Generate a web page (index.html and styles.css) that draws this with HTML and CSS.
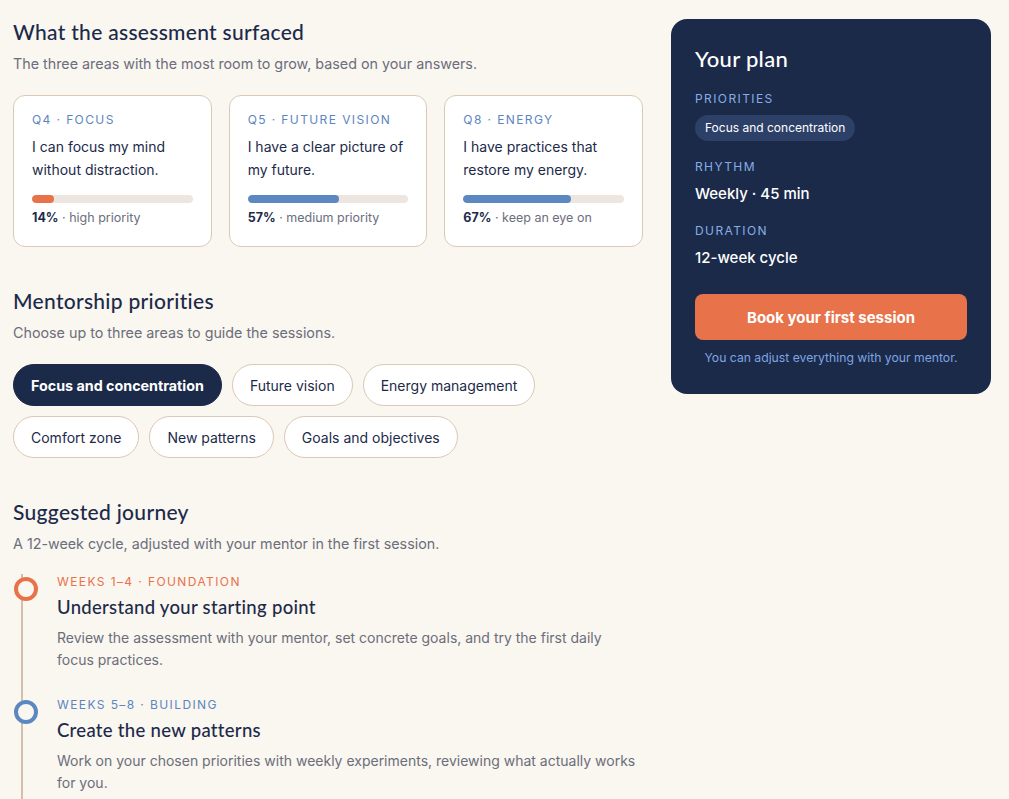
FILE: index.html
```html
<!DOCTYPE html>
<html>
<head>
    <title>Your mentorship plan</title>
    <link rel="stylesheet" href="styles.css">
</head>
<body>
    <div class="page">
        <main class="main-col">
            <!-- Assessment results -->
            <section class="section">
                <h2 class="section-title">What the assessment surfaced</h2>
                <p class="section-sub">The three areas with the most room to grow, based on your answers.</p>

                <div class="cards">
                    <div class="card">
                        <div class="card-label">Q4 · Focus</div>
                        <p class="card-text">I can focus my mind without distraction.</p>
                        <div class="bar"><div class="bar-fill fill-orange" style="width: 14%;"></div></div>
                        <div class="card-foot"><b>14%</b> · high priority</div>
                    </div>
                    <div class="card">
                        <div class="card-label">Q5 · Future vision</div>
                        <p class="card-text">I have a clear picture of my future.</p>
                        <div class="bar"><div class="bar-fill fill-blue" style="width: 57%;"></div></div>
                        <div class="card-foot"><b>57%</b> · medium priority</div>
                    </div>
                    <div class="card">
                        <div class="card-label">Q8 · Energy</div>
                        <p class="card-text">I have practices that restore my energy.</p>
                        <div class="bar"><div class="bar-fill fill-blue" style="width: 67%;"></div></div>
                        <div class="card-foot"><b>67%</b> · keep an eye on</div>
                    </div>
                </div>
            </section>

            <!-- Priority picker -->
            <section class="section">
                <h2 class="section-title">Mentorship priorities</h2>
                <p class="section-sub">Choose up to three areas to guide the sessions.</p>

                <div class="chips">
                    <button class="chip chip-active">Focus and concentration</button>
                    <button class="chip">Future vision</button>
                    <button class="chip">Energy management</button>
                    <button class="chip">Comfort zone</button>
                    <button class="chip">New patterns</button>
                    <button class="chip">Goals and objectives</button>
                </div>
            </section>

            <!-- Journey timeline -->
            <section class="section">
                <h2 class="section-title">Suggested journey</h2>
                <p class="section-sub">A 12-week cycle, adjusted with your mentor in the first session.</p>

                <div class="timeline">
                    <div class="step">
                        <span class="dot dot-orange"></span>
                        <div class="step-label label-orange">Weeks 1–4 · Foundation</div>
                        <h3 class="step-title">Understand your starting point</h3>
                        <p class="step-text">Review the assessment with your mentor, set concrete goals, and try the first daily focus practices.</p>
                    </div>
                    <div class="step">
                        <span class="dot dot-blue"></span>
                        <div class="step-label label-blue">Weeks 5–8 · Building</div>
                        <h3 class="step-title">Create the new patterns</h3>
                        <p class="step-text">Work on your chosen priorities with weekly experiments, reviewing what actually works for you.</p>
                    </div>
                </div>
            </section>
        </main>

        <aside class="plan">
            <h2 class="plan-title">Your plan</h2>

            <div class="plan-label">Priorities</div>
            <div class="plan-tags">
                <span class="plan-tag">Focus and concentration</span>
            </div>

            <div class="plan-label">Rhythm</div>
            <div class="plan-value">Weekly · 45 min</div>

            <div class="plan-label">Duration</div>
            <div class="plan-value">12-week cycle</div>

            <button class="book-btn">Book your first session</button>
            <p class="plan-note">You can adjust everything with your mentor.</p>
        </aside>
    </div>
</body>
</html>
```

FILE: styles.css
```css
/* Base page */
body {
    margin: 0;
    background: #faf6f0;
    color: #1c2a4a;
    font-family: Inter, "Noto Sans", sans-serif;
    overflow: hidden;
}

.page {
    display: grid;
    grid-template-columns: 630px 320px;
    gap: 28px;
    align-items: start;
    padding: 19px 18px 0 13px;
}

/* Section headings */
.section + .section {
    margin-top: 41px;
}

.section-title {
    margin: 0;
    font-family: Lato, "Noto Sans", sans-serif;
    font-weight: 500;
    font-size: 21px;
    line-height: 26px;
    letter-spacing: 0.3px;
    color: #1c2a4a;
}

.section-sub {
    margin: 9px 0 0;
    font-size: 14.3px;
    line-height: 20px;
    color: #6b6e7b;
}

/* Assessment cards */
.cards {
    display: grid;
    grid-template-columns: repeat(3, 1fr);
    gap: 17px;
    margin-top: 21px;
}

.card {
    background: #fff;
    border: 1px solid #dcc8b6;
    border-radius: 12px;
    padding: 16px 18px 19px;
}

.card-label {
    font-size: 12px;
    line-height: 16px;
    letter-spacing: 1.4px;
    text-transform: uppercase;
    color: #5b86c0;
}

.card-text {
    margin: 7px 0 0;
    font-size: 14px;
    line-height: 23px;
    color: #1c2a4a;
}

.bar {
    height: 8px;
    margin-top: 14px;
    border-radius: 4px;
    background: #ede6e0;
    overflow: hidden;
}

.bar-fill {
    height: 100%;
    border-radius: 4px;
}

.fill-orange { background: #e8724a; }
.fill-blue { background: #5b88c0; }

.card-foot {
    margin-top: 6px;
    font-size: 12.5px;
    line-height: 18px;
    color: #6b6e7b;
}

.card-foot b {
    color: #1c2a4a;
}

/* Priority chips */
.chips {
    display: flex;
    flex-wrap: wrap;
    gap: 10px;
    margin-top: 21px;
}

.chip {
    height: 42px;
    padding: 0 17px;
    border: 1px solid #dcc8b6;
    border-radius: 21px;
    background: #fff;
    font-family: Inter, "Noto Sans", sans-serif;
    font-size: 14px;
    color: #1c2a4a;
    cursor: pointer;
}

.chip-active {
    background: #1c2a4a;
    border-color: #1c2a4a;
    color: #fff;
    font-weight: 700;
    font-size: 14.3px;
}

/* Timeline */
.timeline {
    margin: 20px 0 0 8px;
    border-left: 2px solid #d4bfae;
    padding-left: 34px;
    padding-bottom: 40px;
}

.step {
    position: relative;
}

.step + .step {
    margin-top: 26px;
}

.dot {
    position: absolute;
    left: -43px;
    top: 3px;
    width: 16px;
    height: 16px;
    border-radius: 50%;
    border: 4px solid;
    background: #faf6f0;
}

.dot-orange { border-color: #e8724a; }
.dot-blue { border-color: #5b88c0; }

.step-label {
    font-size: 12px;
    line-height: 16px;
    letter-spacing: 1.4px;
    text-transform: uppercase;
}

.label-orange { color: #e8724a; }
.label-blue { color: #5b86c0; }

.step-title {
    margin: 5px 0 0;
    font-family: Lato, "Noto Sans", sans-serif;
    font-weight: 500;
    font-size: 18.5px;
    line-height: 24px;
    letter-spacing: 0.3px;
}

.step-text {
    max-width: 582px;
    margin: 8px 0 0;
    font-size: 14px;
    line-height: 22px;
    color: #6b6e7b;
}

/* Plan panel */
.plan {
    background: #1c2a4a;
    border-radius: 16px;
    padding: 26px 24px 27px;
    color: #fff;
}

.plan-title {
    margin: 0;
    font-family: Lato, "Noto Sans", sans-serif;
    font-weight: 500;
    font-size: 22px;
    line-height: 28px;
    letter-spacing: 0.3px;
}

.plan-label {
    margin-top: 18px;
    font-size: 12px;
    line-height: 16px;
    letter-spacing: 1.4px;
    text-transform: uppercase;
    color: #86aee6;
}

.plan-tags {
    margin-top: 8px;
}

.plan-tag {
    display: inline-block;
    padding: 0 10px;
    height: 26px;
    line-height: 26px;
    border-radius: 13px;
    background: #2d4068;
    font-size: 12px;
}

.plan-value {
    margin-top: 8px;
    font-size: 15px;
    line-height: 22px;
    font-weight: 500;
}

.book-btn {
    display: block;
    width: 100%;
    height: 46px;
    margin-top: 25px;
    border: none;
    border-radius: 8px;
    background: #e8724a;
    color: #fff;
    font-family: Inter, "Noto Sans", sans-serif;
    font-size: 15px;
    font-weight: 700;
    cursor: pointer;
}

.plan-note {
    margin: 9px 0 0;
    text-align: center;
    font-size: 12.2px;
    line-height: 18px;
    color: #7ea5e0;
}
```
